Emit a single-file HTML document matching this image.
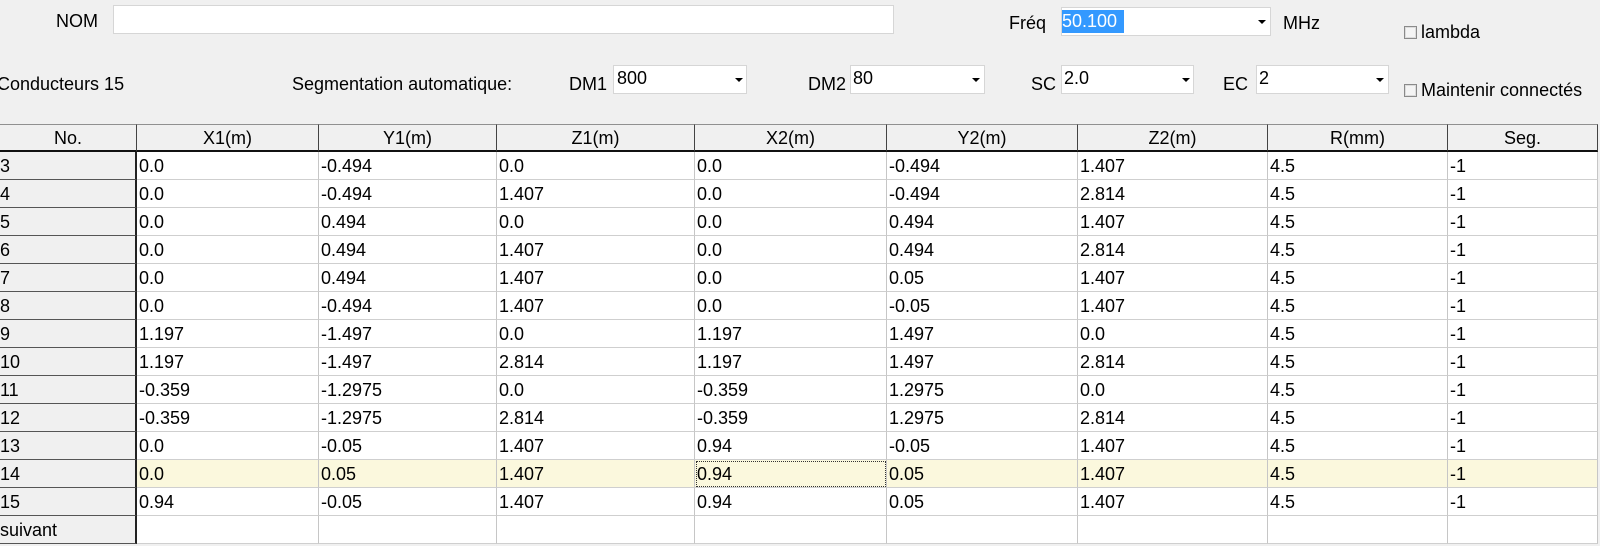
<!DOCTYPE html>
<html><head><meta charset="utf-8">
<style>
*{margin:0;padding:0;box-sizing:border-box}
body{width:1600px;height:546px;background:#f0f0f0;font-family:"Liberation Sans",Arial,sans-serif;font-size:18px;color:#000;position:relative;overflow:hidden}
.a{position:absolute;white-space:nowrap}
.box{position:absolute;background:#fff;border:1px solid #d6d6d6}
.arr{position:absolute;width:0;height:0;border-left:4px solid transparent;border-right:4px solid transparent;border-top:4px solid #000}
.cb{position:absolute;width:13px;height:13px;border:1px solid #8a8a8a;background:#f4f4f4;box-shadow:inset 0 0 0 1px #dcdcdc}
.row{position:absolute;left:0;height:28px;display:flex}
.row div{height:28px;line-height:28px;border-right:1px solid #c6c6c6;border-bottom:1px solid #cfcfcf;padding-left:2px;background:#fff;overflow:hidden;white-space:nowrap}
.row div:first-child{background:#f0f0f0;padding-left:0;border-right:2px solid #222;border-bottom:1px solid #555}
.row.hl div{background:#fbf8dd}
.row.hl div:first-child{background:#f0f0f0}
.row.hd div{background:#f0f0f0;text-align:center;border-right:1px solid #444;border-bottom:2px solid #111;border-top:1px solid #909090;padding:0;line-height:26px}
.c0{width:137px}.c1{width:182px}.c2{width:178px}.c3{width:198px}.c4{width:192px}.c5{width:191px}.c6{width:190px}.c7{width:180px}.c8{width:150px}
</style></head><body>
<div class="a" style="left:56px;top:11px">NOM</div>
<div class="box" style="left:113px;top:5px;width:781px;height:29px"></div>
<div class="a" style="left:1009px;top:13px">Fréq</div>
<div class="box" style="left:1061px;top:7px;width:210px;height:29px"></div>
<div class="a" style="left:1062px;top:10px;height:23px;width:62px;background:#3399ff;color:#fff;line-height:22px">50.100</div>
<div class="arr" style="left:1258px;top:20px"></div>
<div class="a" style="left:1283px;top:13px">MHz</div>
<div class="cb" style="left:1404px;top:26px"></div>
<div class="a" style="left:1421px;top:22px">lambda</div>

<div class="a" style="left:-3px;top:74px">Conducteurs 15</div>
<div class="a" style="left:292px;top:74px">Segmentation automatique:</div>
<div class="a" style="left:569px;top:74px">DM1</div>
<div class="box" style="left:613px;top:65px;width:134px;height:29px"></div>
<div class="a" style="left:617px;top:68px">800</div>
<div class="arr" style="left:735px;top:78px"></div>
<div class="a" style="left:808px;top:74px">DM2</div>
<div class="box" style="left:850px;top:65px;width:135px;height:29px"></div>
<div class="a" style="left:853px;top:68px">80</div>
<div class="arr" style="left:972px;top:78px"></div>
<div class="a" style="left:1031px;top:74px">SC</div>
<div class="box" style="left:1061px;top:65px;width:133px;height:29px"></div>
<div class="a" style="left:1064px;top:68px">2.0</div>
<div class="arr" style="left:1182px;top:78px"></div>
<div class="a" style="left:1223px;top:74px">EC</div>
<div class="box" style="left:1256px;top:65px;width:133px;height:29px"></div>
<div class="a" style="left:1259px;top:68px">2</div>
<div class="arr" style="left:1376px;top:78px"></div>
<div class="cb" style="left:1404px;top:84px"></div>
<div class="a" style="left:1421px;top:80px">Maintenir connectés</div>

<div class="row hd" style="top:124px"><div class="c0">No.</div><div class="c1">X1(m)</div><div class="c2">Y1(m)</div><div class="c3">Z1(m)</div><div class="c4">X2(m)</div><div class="c5">Y2(m)</div><div class="c6">Z2(m)</div><div class="c7">R(mm)</div><div class="c8">Seg.</div></div>
<div class="row" style="top:152px"><div class="c0">3</div><div class="c1">0.0</div><div class="c2">-0.494</div><div class="c3">0.0</div><div class="c4">0.0</div><div class="c5">-0.494</div><div class="c6">1.407</div><div class="c7">4.5</div><div class="c8">-1</div></div>
<div class="row" style="top:180px"><div class="c0">4</div><div class="c1">0.0</div><div class="c2">-0.494</div><div class="c3">1.407</div><div class="c4">0.0</div><div class="c5">-0.494</div><div class="c6">2.814</div><div class="c7">4.5</div><div class="c8">-1</div></div>
<div class="row" style="top:208px"><div class="c0">5</div><div class="c1">0.0</div><div class="c2">0.494</div><div class="c3">0.0</div><div class="c4">0.0</div><div class="c5">0.494</div><div class="c6">1.407</div><div class="c7">4.5</div><div class="c8">-1</div></div>
<div class="row" style="top:236px"><div class="c0">6</div><div class="c1">0.0</div><div class="c2">0.494</div><div class="c3">1.407</div><div class="c4">0.0</div><div class="c5">0.494</div><div class="c6">2.814</div><div class="c7">4.5</div><div class="c8">-1</div></div>
<div class="row" style="top:264px"><div class="c0">7</div><div class="c1">0.0</div><div class="c2">0.494</div><div class="c3">1.407</div><div class="c4">0.0</div><div class="c5">0.05</div><div class="c6">1.407</div><div class="c7">4.5</div><div class="c8">-1</div></div>
<div class="row" style="top:292px"><div class="c0">8</div><div class="c1">0.0</div><div class="c2">-0.494</div><div class="c3">1.407</div><div class="c4">0.0</div><div class="c5">-0.05</div><div class="c6">1.407</div><div class="c7">4.5</div><div class="c8">-1</div></div>
<div class="row" style="top:320px"><div class="c0">9</div><div class="c1">1.197</div><div class="c2">-1.497</div><div class="c3">0.0</div><div class="c4">1.197</div><div class="c5">1.497</div><div class="c6">0.0</div><div class="c7">4.5</div><div class="c8">-1</div></div>
<div class="row" style="top:348px"><div class="c0">10</div><div class="c1">1.197</div><div class="c2">-1.497</div><div class="c3">2.814</div><div class="c4">1.197</div><div class="c5">1.497</div><div class="c6">2.814</div><div class="c7">4.5</div><div class="c8">-1</div></div>
<div class="row" style="top:376px"><div class="c0">11</div><div class="c1">-0.359</div><div class="c2">-1.2975</div><div class="c3">0.0</div><div class="c4">-0.359</div><div class="c5">1.2975</div><div class="c6">0.0</div><div class="c7">4.5</div><div class="c8">-1</div></div>
<div class="row" style="top:404px"><div class="c0">12</div><div class="c1">-0.359</div><div class="c2">-1.2975</div><div class="c3">2.814</div><div class="c4">-0.359</div><div class="c5">1.2975</div><div class="c6">2.814</div><div class="c7">4.5</div><div class="c8">-1</div></div>
<div class="row" style="top:432px"><div class="c0">13</div><div class="c1">0.0</div><div class="c2">-0.05</div><div class="c3">1.407</div><div class="c4">0.94</div><div class="c5">-0.05</div><div class="c6">1.407</div><div class="c7">4.5</div><div class="c8">-1</div></div>
<div class="row hl" style="top:460px"><div class="c0">14</div><div class="c1">0.0</div><div class="c2">0.05</div><div class="c3">1.407</div><div class="c4" style="outline:1px dotted #333;outline-offset:-2px">0.94</div><div class="c5">0.05</div><div class="c6">1.407</div><div class="c7">4.5</div><div class="c8">-1</div></div>
<div class="row" style="top:488px"><div class="c0">15</div><div class="c1">0.94</div><div class="c2">-0.05</div><div class="c3">1.407</div><div class="c4">0.94</div><div class="c5">0.05</div><div class="c6">1.407</div><div class="c7">4.5</div><div class="c8">-1</div></div>
<div class="row" style="top:516px"><div class="c0">suivant</div><div class="c1"></div><div class="c2"></div><div class="c3"></div><div class="c4"></div><div class="c5"></div><div class="c6"></div><div class="c7"></div><div class="c8"></div></div>
</body></html>
